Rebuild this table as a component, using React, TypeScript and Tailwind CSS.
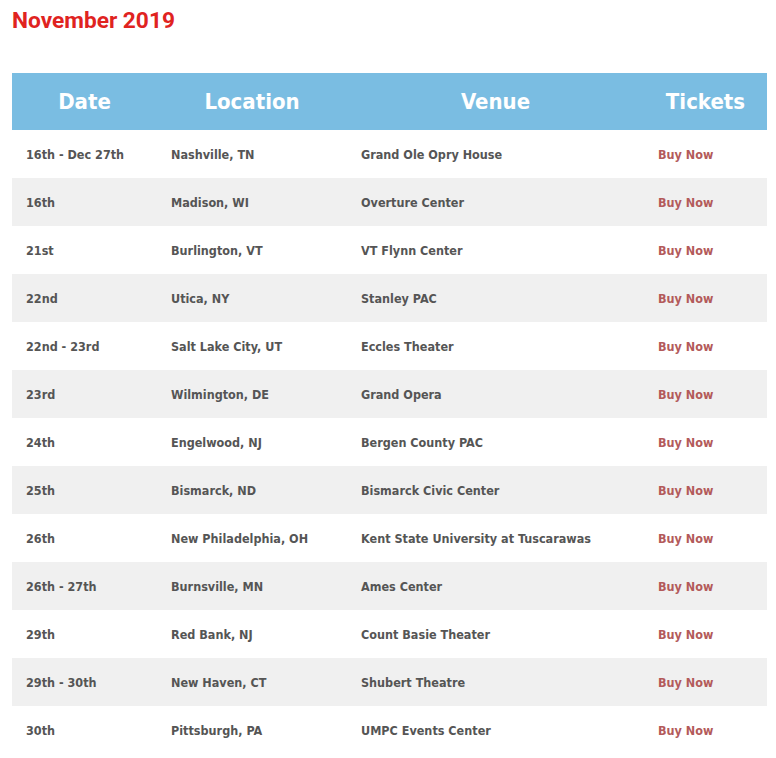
const shows = [
  { date: "16th - Dec 27th", location: "Nashville, TN", venue: "Grand Ole Opry House" },
  { date: "16th", location: "Madison, WI", venue: "Overture Center" },
  { date: "21st", location: "Burlington, VT", venue: "VT Flynn Center" },
  { date: "22nd", location: "Utica, NY", venue: "Stanley PAC" },
  { date: "22nd - 23rd", location: "Salt Lake City, UT", venue: "Eccles Theater" },
  { date: "23rd", location: "Wilmington, DE", venue: "Grand Opera" },
  { date: "24th", location: "Engelwood, NJ", venue: "Bergen County PAC" },
  { date: "25th", location: "Bismarck, ND", venue: "Bismarck Civic Center" },
  { date: "26th", location: "New Philadelphia, OH", venue: "Kent State University at Tuscarawas" },
  { date: "26th - 27th", location: "Burnsville, MN", venue: "Ames Center" },
  { date: "29th", location: "Red Bank, NJ", venue: "Count Basie Theater" },
  { date: "29th - 30th", location: "New Haven, CT", venue: "Shubert Theatre" },
  { date: "30th", location: "Pittsburgh, PA", venue: "UMPC Events Center" },
];

const cols = "grid grid-cols-[145px_190px_297px_123px]";

export default function App() {
  return (
    <div className="bg-white min-h-[758px] px-3 pt-[6px]">
      <h2 className="text-[22.7px] font-bold leading-[30px] text-[#e0231f] [font-family:Roboto,sans-serif]">
        November 2019
      </h2>

      <div className="mt-[37px] w-[755px] [font-family:'DejaVu_Sans_Condensed','DejaVu_Sans',sans-serif] font-bold">
        {/* encabezado */}
        <div className={`${cols} h-[57px] items-center bg-[#7abde2] text-white text-[22px]`}>
          <div className="text-center">Date</div>
          <div className="text-center">Location</div>
          <div className="text-center">Venue</div>
          <div className="text-center">Tickets</div>
        </div>

        {shows.map((s, i) => (
          <div
            key={i}
            className={`${cols} h-12 items-center pt-[2px] text-[12.5px] text-[#555555] ${i % 2 === 1 ? "bg-[#f0f0f0]" : "bg-white"}`}
          >
            <div className="pl-[14px]">{s.date}</div>
            <div className="pl-[14px]">{s.location}</div>
            <div className="pl-[14px]">{s.venue}</div>
            <div className="pl-[14px]">
              <a href="#" className="text-[#b35a5a]">Buy Now</a>
            </div>
          </div>
        ))}
      </div>
    </div>
  );
}
